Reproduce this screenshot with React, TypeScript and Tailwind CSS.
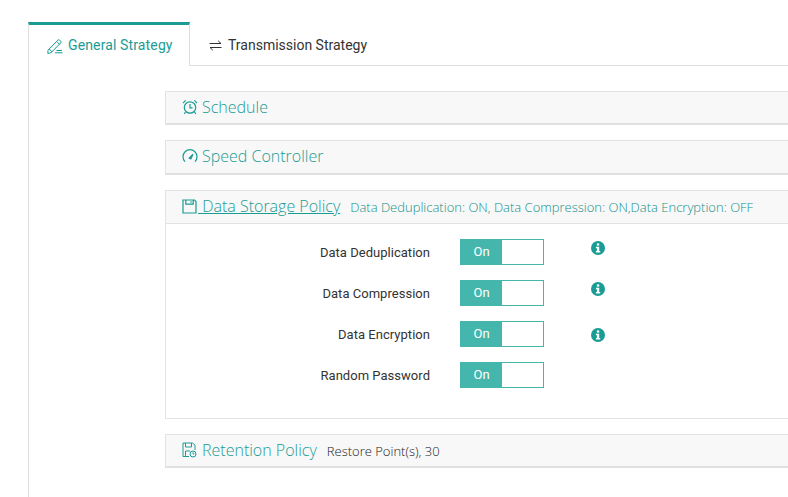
import React from "react";

const OS = "font-['Open_Sans',sans-serif]";
const RB = "font-['Roboto',sans-serif]";

function Alarm() {
  return (
    <svg width="16" height="16" viewBox="0 0 16 16" fill="none" stroke="currentColor" strokeWidth="1.2">
      <circle cx="8" cy="8.5" r="5.7" />
      <path d="M8 5v3.8h2.6M1 4.2 3.6 1.4M15 4.2 12.4 1.4M3.6 13l-1.4 2M12.4 13l1.4 2" />
    </svg>
  );
}
function Gauge() {
  return (
    <svg width="16" height="16" viewBox="0 0 16 16" fill="none" stroke="currentColor" strokeWidth="1.2">
      <path d="M3 13.6A7 7 0 1 1 13 13.6" />
      <path d="M7.2 10.2 11 6.2 8.8 11z" fill="currentColor" />
    </svg>
  );
}
function Floppy() {
  return (
    <svg width="15" height="15" viewBox="0 0 15 15" fill="none" stroke="currentColor" strokeWidth="1.2">
      <path d="M1 1h11.5L14 2.5V14H1z" />
      <path d="M3.8 1v4.2h7.4V1M9 2.2v1.6" />
    </svg>
  );
}
function FloppyClock() {
  return (
    <svg width="15" height="16" viewBox="0 0 15 16" fill="none" stroke="currentColor" strokeWidth="1">
      <path d="M7 14.5H1V1h9.5L13 3.2V8" />
      <path d="M3.5 1v4h6V1M3.5 14.5V9H8" />
      <circle cx="11" cy="12" r="3" />
      <path d="M11 10.4V12h1.4" />
    </svg>
  );
}
function Pencil() {
  return (
    <svg width="16" height="16" viewBox="0 0 16 16" fill="none" stroke="currentColor" strokeWidth="1">
      <path d="M1 12.2 10.8 2.2a1.3 1.3 0 0 1 1.9 0l.9.9a1.3 1.3 0 0 1 0 1.9L4 14.8l-3.2.6z" />
      <path d="M9.6 3.4l3 3M2.2 11l2.8 2.9M9.5 12.5H15M8 14.8h7.5" />
    </svg>
  );
}
function Arrows() {
  return (
    <svg width="13" height="11" viewBox="0 0 13 11" fill="none" stroke="currentColor" strokeWidth="1">
      <path d="M.5 3.5h11.5M9.2.8 12 3.5M12.5 7.5H1M3.8 10.2 1 7.5" />
    </svg>
  );
}
function Info() {
  return (
    <svg width="14" height="14" viewBox="0 0 14 14">
      <circle cx="7" cy="7" r="7" fill="#1a9c94" />
      <rect x="5.9" y="2.4" width="2.3" height="2.2" fill="#fff" />
      <path d="M4.9 5.7h3.3v4.2h1v1.5H4.9V9.9h1V7.2h-1z" fill="#fff" />
    </svg>
  );
}

function Header({
  icon,
  title,
  sub,
  subDark,
  underline,
  heightClass,
  barClass,
}: {
  icon: React.ReactNode;
  title: string;
  sub?: string;
  subDark?: boolean;
  underline?: boolean;
  heightClass: string;
  barClass?: string;
}) {
  return (
    <div className={`flex items-center pl-[16px] pb-[2px] bg-[#f8f8f8] text-[#1a9c94] ${heightClass} ${barClass ?? ""}`}>
      <span className={`flex items-center whitespace-pre text-[16px] font-light ${OS} ${underline ? "underline decoration-[#1a9c94]" : ""}`}>
        <span className={`flex ${underline ? "w-[16px]" : "w-[20px]"}`}>{icon}</span>
        {title}
      </span>
      {sub && (
        <span className={`ml-[10px] mt-[4px] text-[13px] font-light whitespace-nowrap ${OS} ${subDark ? "text-[#222222]" : "text-[#139089]"}`}>{sub}</span>
      )}
    </div>
  );
}

function Row({ label, info, infoClass }: { label: string; info?: boolean; infoClass?: string }) {
  return (
    <div className="flex items-center h-[26px] mb-[15px]">
      <div className={`w-[264px] pt-[2px] text-right text-[13px] tracking-[0.03px] text-[#333333] ${RB}`}>{label}</div>
      <div className="ml-[30px] w-[84px] h-[26px] flex border border-[#45b6ac] bg-white">
        <div className={`w-[41px] bg-[#45b6ac] text-white text-[13px] flex items-center justify-center ${RB}`}>On</div>
      </div>
      {info && <div className={`ml-[47px] flex ${infoClass ?? "-mt-[8px]"}`}><Info /></div>}
    </div>
  );
}

export default function App() {
  return (
    <div className="w-[788px] h-[497px] overflow-hidden bg-white pt-[22px] pl-[28px]">
      <div className="flex h-[44px] border-b border-[#dddddd]">
        <div className={`w-[162px] h-[44px] border-t-[3px] border-t-[#1a9c94] border-l border-r border-[#dddddd] bg-white flex items-center pl-[18px] gap-[5px] text-[14px] tracking-[0.13px] text-[#1a9c94] ${RB}`}>
          <Pencil />
          <span>General Strategy</span>
        </div>
        <div className={`flex items-center pl-[19px] pt-[4px] gap-[6px] text-[14px] text-[#333333] ${RB}`}>
          <Arrows />
          <span>Transmission Strategy</span>
        </div>
      </div>
      <div className="border-l border-[#dddddd] w-[900px] h-[432px] pl-[136px] pt-[25px]">
        <div className="w-[700px] flex flex-col gap-[15px]">
          <div className="border border-[#e3e3e3] border-b-2 border-b-[#e0e0e0]">
            <Header icon={<Alarm />} title="Schedule" heightClass="h-[31px]" />
          </div>
          <div className="border border-[#e3e3e3] border-b-2 border-b-[#e0e0e0]">
            <Header icon={<Gauge />} title="Speed Controller" heightClass="h-[32px]" />
          </div>
          <div className="border border-[#e3e3e3] h-[229px]">
            <Header
              icon={<Floppy />}
              title=" Data Storage Policy"
              underline
              sub="Data Deduplication: ON, Data Compression: ON,Data Encryption: OFF"
              heightClass="h-[33px]"
              barClass="border-b border-[#e3e3e3]"
            />
            <div className="pt-[15px]">
              <Row label="Data Deduplication" info />
              <Row label="Data Compression" info />
              <Row label="Data Encryption" info infoClass="mt-[2px]" />
              <Row label="Random Password" />
            </div>
          </div>
          <div className="border border-[#e3e3e3] border-b-2 border-b-[#e0e0e0]">
            <Header icon={<FloppyClock />} title="Retention Policy" sub="Restore Point(s), 30" subDark heightClass="h-[31px]" />
          </div>
        </div>
      </div>
    </div>
  );
}
